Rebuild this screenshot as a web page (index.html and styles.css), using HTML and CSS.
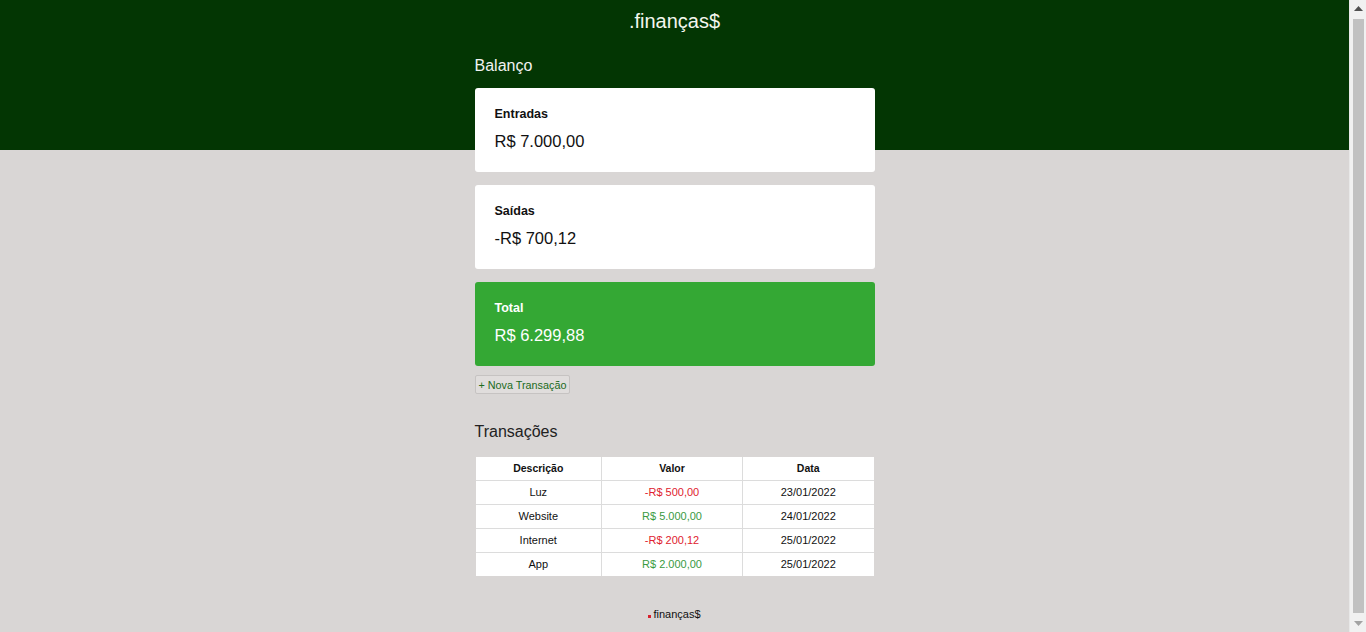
FILE: index.html
```html
<!DOCTYPE html>
<html lang="pt-BR">
<head>
<meta charset="utf-8">
<title>.finanças$</title>
<link rel="stylesheet" href="styles.css">
</head>
<body>
<div class="page">
  <header class="hero">
    <h1 class="logo">.finanças$</h1>
  </header>
  <main class="container">
    <section class="balance">
      <h2 class="section-title light">Balanço</h2>
      <div class="card">
        <h3 class="card-label">Entradas</h3>
        <p class="card-value">R$ 7.000,00</p>
      </div>
      <div class="card">
        <h3 class="card-label">Saídas</h3>
        <p class="card-value">-R$ 700,12</p>
      </div>
      <div class="card total">
        <h3 class="card-label">Total</h3>
        <p class="card-value">R$ 6.299,88</p>
      </div>
    </section>
    <button class="new-btn" type="button">+ Nova Transação</button>
    <section class="transactions">
      <h2 class="section-title">Transações</h2>
      <table class="tx-table">
        <thead>
          <tr><th class="c1">Descrição</th><th class="c2">Valor</th><th class="c3">Data</th></tr>
        </thead>
        <tbody>
          <tr><td>Luz</td><td class="expense">-R$ 500,00</td><td>23/01/2022</td></tr>
          <tr><td>Website</td><td class="income">R$ 5.000,00</td><td>24/01/2022</td></tr>
          <tr><td>Internet</td><td class="expense">-R$ 200,12</td><td>25/01/2022</td></tr>
          <tr><td>App</td><td class="income">R$ 2.000,00</td><td>25/01/2022</td></tr>
        </tbody>
      </table>
    </section>
    <footer class="footer"><span class="dot"></span>finanças$</footer>
  </main>
</div>
<aside class="scrollbar" aria-hidden="true">
  <span class="sb-btn up"><svg width="9" height="5" viewBox="0 0 9 5"><path d="M0 5 L4.5 0 L9 5 Z" fill="#505050"/></svg></span>
  <span class="sb-track"><span class="sb-thumb"></span></span>
  <span class="sb-btn down"><svg width="9" height="5" viewBox="0 0 9 5"><path d="M0 0 L9 0 L4.5 5 Z" fill="#a3a3a3"/></svg></span>
</aside>
</body>
</html>
```
FILE: styles.css
```css
* { box-sizing: border-box; }
html, body { margin: 0; padding: 0; }
body {
  display: flex;
  align-items: flex-start;
  background: #d9d6d5;
  font-family: "Liberation Sans", Arial, sans-serif;
  color: #111;
  height: 632px;
  overflow: hidden;
}
.page { flex: 1; min-width: 0; }
.hero {
  background: #033603;
  height: 150px;
  padding-top: 9px;
}
.logo {
  margin: 0;
  text-align: center;
  font-size: 20px;
  line-height: 24px;
  font-weight: 400;
  color: #f4f6ee;
}
.container {
  width: 400px;
  margin: -93px auto 0;
  padding-bottom: 20px;
}
.section-title {
  margin: 0;
  font-size: 16px;
  line-height: 18px;
  font-weight: 400;
  color: #222;
}
.section-title.light { color: #f2f2f2; margin-bottom: 13px; }
.card {
  background: #fff;
  border-radius: 3px;
  padding: 18px 20px 21px;
  margin-bottom: 13px;
}
.card-label {
  margin: 0;
  font-size: 12.5px;
  line-height: 16px;
  font-weight: 700;
  color: #111;
}
.card-value {
  margin: 9px 0 0;
  font-size: 16.5px;
  line-height: 20px;
  color: #111;
}
.card.total { background: #34a834; margin-bottom: 9px; }
.card.total .card-label, .card.total .card-value { color: #fff; }
.new-btn {
  display: block;
  height: 19px;
  padding: 0 3px;
  margin: 0;
  font-family: inherit;
  font-size: 10.8px;
  color: #216b21;
  background: #e0dddc;
  border: 1px solid #c6c3c2;
  border-radius: 2px;
}
.transactions { margin-top: 29px; }
.transactions .section-title { margin-bottom: 16px; }
.tx-table {
  width: 398px;
  margin: 0 1px;
  border-collapse: collapse;
  border-style: hidden;
  background: #fff;
  font-size: 11px;
  text-align: center;
}
.tx-table th, .tx-table td {
  border: 1px solid #dcdcdc;
  padding: 0;
  height: 24px;
  color: #111;
}
.tx-table th { height: 23px; font-weight: 700; font-size: 10.5px; }
.tx-table .c1 { width: 126px; }
.tx-table .c2 { width: 141px; }
.tx-table td.expense { color: #e0222e; }
.tx-table td.income { color: #3a9a3f; }
.footer {
  margin-top: 31px;
  text-align: center;
  font-size: 11px;
  line-height: 14px;
  color: #111;
}
.footer .dot {
  display: inline-block;
  width: 3px;
  height: 3px;
  margin-right: 2px;
  background: #d8202c;
  vertical-align: baseline;
}
.scrollbar {
  flex: 0 0 17px;
  height: 632px;
  display: flex;
  flex-direction: column;
  background: #f1f1f1;
  border-left: 1px solid #e8e8e8;
}
.sb-btn {
  flex: 0 0 17px;
  display: flex;
  align-items: center;
  justify-content: center;
}
.sb-track {
  flex: 1;
  display: flex;
  padding: 2px 2px 2px 3px;
}
.sb-thumb { flex: 1; background: #c1c1c1; }
```
